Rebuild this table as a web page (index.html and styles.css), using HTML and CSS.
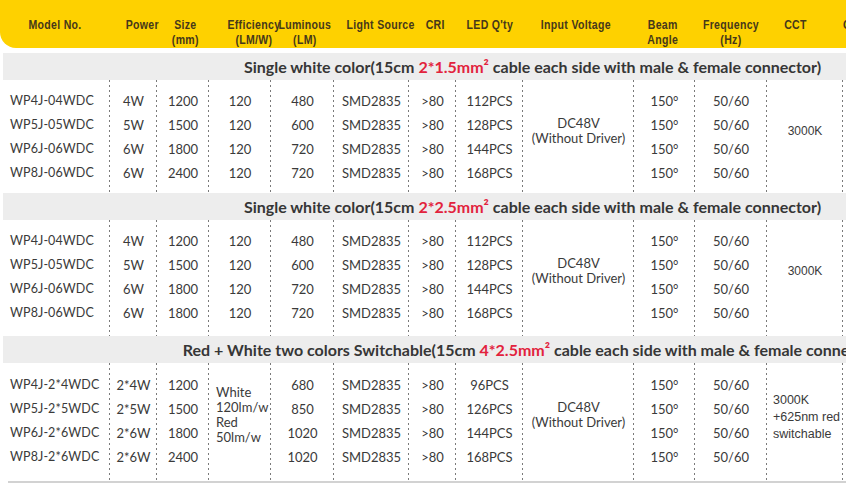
FILE: index.html
```html
<!DOCTYPE html>
<html>
<head>
<meta charset="utf-8">
<link rel="stylesheet" href="styles.css">
</head>
<body>
<div class="sheet">
  <div class="cols head">
    <div class="hc"><span class="ht">Model No.</span></div>
    <div class="hc h-power"><span class="ht">Power</span></div>
    <div class="hc h-size"><span class="ht">Size<br>(mm)</span></div>
    <div class="hc h-eff"><span class="ht">Efficiency<br>(LM/W)</span></div>
    <div class="hc"><span class="ht">Luminous<br>(LM)</span></div>
    <div class="hc h-ls"><span class="ht">Light Source</span></div>
    <div class="hc h-cri"><span class="ht">CRI</span></div>
    <div class="hc"><span class="ht">LED Q'ty</span></div>
    <div class="hc h-in"><span class="ht">Input Voltage</span></div>
    <div class="hc h-beam"><span class="ht">Beam<br>Angle</span></div>
    <div class="hc h-freq"><span class="ht">Frequency<br>(Hz)</span></div>
    <div class="hc h-cct"><span class="ht">CCT</span></div>
    <div class="hc h-last"><span class="ht tl">Certificate</span></div>
  </div>

  <section class="group g1">
    <div class="band"><div class="band-inner">Single white color(15cm&nbsp;<span class="hl">2*1.5mm²</span>&nbsp;cable each side with male &amp; female connector)</div></div>
    <div class="cols rows">
      <div class="col model"><div class="c">WP4J-04WDC</div><div class="c">WP5J-05WDC</div><div class="c">WP6J-06WDC</div><div class="c">WP8J-06WDC</div></div>
      <div class="col"><div class="c">4W</div><div class="c">5W</div><div class="c">6W</div><div class="c">6W</div></div>
      <div class="col"><div class="c">1200</div><div class="c">1500</div><div class="c">1800</div><div class="c">2400</div></div>
      <div class="col"><div class="c">120</div><div class="c">120</div><div class="c">120</div><div class="c">120</div></div>
      <div class="col"><div class="c">480</div><div class="c">600</div><div class="c">720</div><div class="c">720</div></div>
      <div class="col smd"><div class="c">SMD2835</div><div class="c">SMD2835</div><div class="c">SMD2835</div><div class="c">SMD2835</div></div>
      <div class="col"><div class="c">&gt;80</div><div class="c">&gt;80</div><div class="c">&gt;80</div><div class="c">&gt;80</div></div>
      <div class="col"><div class="c">112PCS</div><div class="c">128PCS</div><div class="c">144PCS</div><div class="c">168PCS</div></div>
      <div class="col merge"><div class="blk">DC48V<br>(Without Driver)</div></div>
      <div class="col"><div class="c">150°</div><div class="c">150°</div><div class="c">150°</div><div class="c">150°</div></div>
      <div class="col"><div class="c">50/60</div><div class="c">50/60</div><div class="c">50/60</div><div class="c">50/60</div></div>
      <div class="col merge"><div class="blk cct">3000K</div></div>
      <div class="col end"></div>
    </div>
  </section>

  <section class="group g2">
    <div class="band"><div class="band-inner">Single white color(15cm&nbsp;<span class="hl">2*2.5mm²</span>&nbsp;cable each side with male &amp; female connector)</div></div>
    <div class="cols rows">
      <div class="col model"><div class="c">WP4J-04WDC</div><div class="c">WP5J-05WDC</div><div class="c">WP6J-06WDC</div><div class="c">WP8J-06WDC</div></div>
      <div class="col"><div class="c">4W</div><div class="c">5W</div><div class="c">6W</div><div class="c">6W</div></div>
      <div class="col"><div class="c">1200</div><div class="c">1500</div><div class="c">1800</div><div class="c">1800</div></div>
      <div class="col"><div class="c">120</div><div class="c">120</div><div class="c">120</div><div class="c">120</div></div>
      <div class="col"><div class="c">480</div><div class="c">600</div><div class="c">720</div><div class="c">720</div></div>
      <div class="col smd"><div class="c">SMD2835</div><div class="c">SMD2835</div><div class="c">SMD2835</div><div class="c">SMD2835</div></div>
      <div class="col"><div class="c">&gt;80</div><div class="c">&gt;80</div><div class="c">&gt;80</div><div class="c">&gt;80</div></div>
      <div class="col"><div class="c">112PCS</div><div class="c">128PCS</div><div class="c">144PCS</div><div class="c">168PCS</div></div>
      <div class="col merge"><div class="blk">DC48V<br>(Without Driver)</div></div>
      <div class="col"><div class="c">150°</div><div class="c">150°</div><div class="c">150°</div><div class="c">150°</div></div>
      <div class="col"><div class="c">50/60</div><div class="c">50/60</div><div class="c">50/60</div><div class="c">50/60</div></div>
      <div class="col merge"><div class="blk cct">3000K</div></div>
      <div class="col end"></div>
    </div>
  </section>

  <section class="group g3">
    <div class="band"><div class="band-inner">Red + White two colors Switchable(15cm&nbsp;<span class="hl">4*2.5mm²</span>&nbsp;cable each side with male &amp; female connector)</div></div>
    <div class="cols rows">
      <div class="col model"><div class="c">WP4J-2*4WDC</div><div class="c">WP5J-2*5WDC</div><div class="c">WP6J-2*6WDC</div><div class="c">WP8J-2*6WDC</div></div>
      <div class="col"><div class="c">2*4W</div><div class="c">2*5W</div><div class="c">2*6W</div><div class="c">2*6W</div></div>
      <div class="col"><div class="c">1200</div><div class="c">1500</div><div class="c">1800</div><div class="c">2400</div></div>
      <div class="col merge left"><div class="blk eff">White<br>120lm/w<br>Red<br>50lm/w</div></div>
      <div class="col"><div class="c">680</div><div class="c">850</div><div class="c">1020</div><div class="c">1020</div></div>
      <div class="col smd"><div class="c">SMD2835</div><div class="c">SMD2835</div><div class="c">SMD2835</div><div class="c">SMD2835</div></div>
      <div class="col"><div class="c">&gt;80</div><div class="c">&gt;80</div><div class="c">&gt;80</div><div class="c">&gt;80</div></div>
      <div class="col"><div class="c">96PCS</div><div class="c">126PCS</div><div class="c">144PCS</div><div class="c">168PCS</div></div>
      <div class="col merge"><div class="blk">DC48V<br>(Without Driver)</div></div>
      <div class="col"><div class="c">150°</div><div class="c">150°</div><div class="c">150°</div><div class="c">150°</div></div>
      <div class="col"><div class="c">50/60</div><div class="c">50/60</div><div class="c">50/60</div><div class="c">50/60</div></div>
      <div class="col merge left"><div class="blk cct multi">3000K<br>+625nm red<br>switchable</div></div>
      <div class="col end"></div>
    </div>
  </section>

  <div class="foot"></div>
</div>
</body>
</html>
```
FILE: styles.css
```css
* {
  box-sizing: border-box;
  margin: 0;
  padding: 0;
}

html, body {
  width: 846px;
  height: 485px;
  overflow: hidden;
  background: #ffffff;
}

body {
  font-family: Lato, "Open Sans", sans-serif;
  color: #3a3a3a;
}

.sheet {
  width: 846px;
}

.cols {
  display: grid;
  grid-template-columns: 110px 47px 52px 62px 63px 75px 47px 67px 111px 61px 72px 76px 3px;
}

/* header */
.head {
  height: 48px;
  background: #fed100;
  border-bottom-left-radius: 16px;
  padding-top: 17px;
  align-items: start;
  font-family: "Liberation Sans", Arial, sans-serif;
  font-weight: 700;
  font-size: 13.5px;
  line-height: 15px;
  color: #46381a;
}

.hc {
  text-align: center;
  white-space: nowrap;
}

.ht {
  display: inline-block;
  letter-spacing: 0.4px;
  transform: scaleX(0.78);
  transform-origin: center top;
}

.ht.tl {
  transform-origin: left top;
}

.h-power { padding-left: 11px; }
.h-size { padding-left: 4px; }
.h-eff { padding-left: 11px; }
.h-ls { padding-left: 3px; }
.h-cri { padding-left: 5px; }
.h-in { padding-right: 5px; }
.h-beam { padding-right: 3px; }
.h-freq { padding-right: 12px; }
.h-cct { padding-right: 20px; }
.h-last { text-align: left; }

/* section title band */
.group:first-of-type {
  margin-top: 5px;
}

.band {
  margin-left: 3px;
  height: 27px;
  background: #ededed;
  overflow: hidden;
}

.band-inner {
  width: 1059px;
  height: 100%;
  display: flex;
  align-items: center;
  justify-content: center;
  white-space: nowrap;
  font-weight: 700;
  font-size: 16px;
  color: #363636;
}

.hl {
  color: #e2233d;
}

/* data rows */
.col {
  display: flex;
  flex-direction: column;
  background-image: linear-gradient(#7a7a7a 0, #7a7a7a 2px, transparent 2px);
  background-size: 1px 5px;
  background-position: right top;
  background-repeat: repeat-y;
}

.col.end {
  background: none;
}

.g1 .col { padding-top: 9px; padding-bottom: 8px; }
.g2 .col { padding-top: 9px; padding-bottom: 11px; }
.g3 .col { padding-top: 10px; padding-bottom: 12px; }

.c {
  height: 24px;
  line-height: 24px;
  text-align: center;
  white-space: nowrap;
  font-size: 13px;
}

.model .c {
  text-align: left;
  padding-left: 10px;
  font-size: 12.5px;
  letter-spacing: 0.1px;
}

.merge {
  justify-content: center;
}

.blk {
  margin-bottom: 12px;
  text-align: center;
  font-size: 13px;
  line-height: 15px;
  white-space: nowrap;
}

.merge.left .blk {
  text-align: left;
}

.blk.eff {
  padding-left: 7px;
  line-height: 15px;
}

.blk.cct {
  font-family: "Liberation Sans", Arial, sans-serif;
  font-size: 12px;
}

.blk.multi {
  padding-left: 6px;
  font-size: 12.5px;
  line-height: 17px;
  margin-bottom: 8px;
}

.foot {
  margin-left: 8px;
  height: 2px;
  background: #d2d2d2;
}
```
